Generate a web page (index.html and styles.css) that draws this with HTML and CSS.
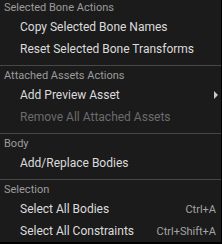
FILE: index.html
```html
<!DOCTYPE html>
<html lang="en">
<head>
    <meta charset="UTF-8">
    <meta name="viewport" content="width=device-width, initial-scale=1.0">
    <link rel="stylesheet" href="styles.css">
    <title>Bone Context Menu</title>
</head>
<body>
    <div class="menu">
        <div class="menu-header">Selected Bone Actions</div>
        <div class="menu-item">Copy Selected Bone Names</div>
        <div class="menu-item">Reset Selected Bone Transforms</div>

        <div class="separator"></div>
        <div class="menu-header">Attached Assets Actions</div>
        <div class="menu-item">
            <span>Add Preview Asset</span>
            <span class="submenu-arrow"></span>
        </div>
        <div class="menu-item disabled">Remove All Attached Assets</div>

        <div class="separator"></div>
        <div class="menu-header">Body</div>
        <div class="menu-item">Add/Replace Bodies</div>

        <div class="separator"></div>
        <div class="menu-header">Selection</div>
        <div class="menu-item">
            <span>Select All Bodies</span>
            <span class="shortcut">Ctrl+A</span>
        </div>
        <div class="menu-item">
            <span>Select All Constraints</span>
            <span class="shortcut">Ctrl+Shift+A</span>
        </div>
    </div>
</body>
</html>
```

FILE: styles.css
```css
body {
    margin: 0;
    background-color: #000;
    font-family: Roboto, "Liberation Sans", sans-serif;
}

.menu {
    width: 221px;
    height: 242px;
    background-color: #1b1b1b;
    border-right: 1px solid #000;
    border-bottom: 2px solid #000;
    overflow: hidden;
}

.menu-header {
    height: 16px;
    line-height: 15px;
    padding-left: 4px;
    font-size: 11px;
    color: #9c9c9c;
}

.menu-item {
    display: flex;
    justify-content: space-between;
    align-items: center;
    height: 22px;
    padding-left: 20px;
    padding-right: 5px;
    font-size: 12px;
    color: #dcdcdc;
}

.menu-item.disabled {
    color: #6c6c6c;
}

.shortcut {
    font-size: 11px;
    color: #a4a4a4;
}

.submenu-arrow {
    width: 0;
    height: 0;
    margin-right: -2px;
    border-top: 4px solid transparent;
    border-bottom: 4px solid transparent;
    border-left: 4px solid #c8c8c8;
}

.separator {
    height: 1px;
    margin: 5px 0 2px 0;
    background-color: #484848;
}
```
